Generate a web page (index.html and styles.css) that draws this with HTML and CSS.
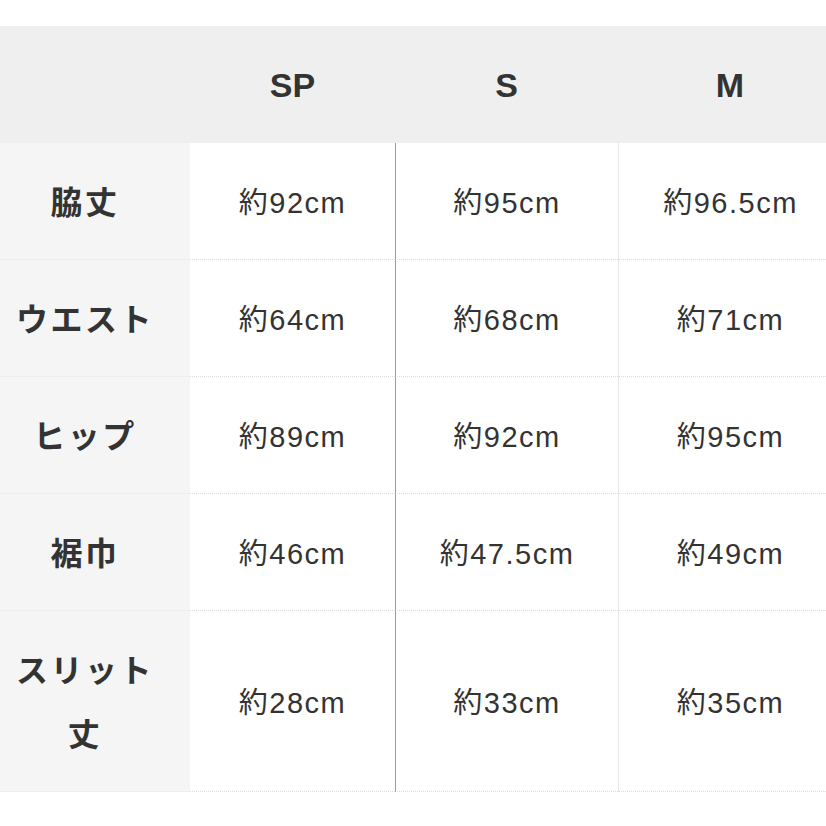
FILE: index.html
```html
<!DOCTYPE html>
<html lang="ja">
<head>
<meta charset="utf-8">
<link rel="stylesheet" href="styles.css">
</head>
<body>
<div class="table">
  <div class="row head">
    <div class="cell label"></div>
    <div class="cell">SP</div>
    <div class="cell">S</div>
    <div class="cell">M</div>
  </div>
  <div class="row">
    <div class="cell label">脇丈</div>
    <div class="cell">約92cm</div>
    <div class="cell c2">約95cm</div>
    <div class="cell c3">約96.5cm</div>
  </div>
  <div class="row">
    <div class="cell label">ウエスト</div>
    <div class="cell">約64cm</div>
    <div class="cell c2">約68cm</div>
    <div class="cell c3">約71cm</div>
  </div>
  <div class="row">
    <div class="cell label">ヒップ</div>
    <div class="cell">約89cm</div>
    <div class="cell c2">約92cm</div>
    <div class="cell c3">約95cm</div>
  </div>
  <div class="row">
    <div class="cell label">裾巾</div>
    <div class="cell">約46cm</div>
    <div class="cell c2">約47.5cm</div>
    <div class="cell c3">約49cm</div>
  </div>
  <div class="row">
    <div class="cell label">スリット丈</div>
    <div class="cell">約28cm</div>
    <div class="cell c2">約33cm</div>
    <div class="cell c3">約35cm</div>
  </div>
</div>
</body>
</html>
```
FILE: styles.css
```css
html, body {
  margin: 0;
  padding: 0;
  background: #ffffff;
  overflow: hidden;
}
body {
  font-family: "Liberation Sans", "Noto Sans CJK JP", sans-serif;
  color: #333333;
}
.table {
  margin-top: 26px;
  width: 842px;
}
.row {
  display: grid;
  grid-template-columns: 190px 205px 223px 224px;
}
.cell {
  display: flex;
  align-items: center;
  justify-content: center;
  text-align: center;
  font-size: 29px;
  letter-spacing: 1.5px;
  line-height: 64px;
  padding: 28px 0 24px;
  border-bottom: 1px dotted #dcdcdc;
  background: #ffffff;
}
.head .cell {
  background: #efefef;
  font-weight: bold;
  font-size: 34px;
  letter-spacing: 0;
  height: 117px;
  padding: 0;
  border-bottom: none;
  box-sizing: border-box;
}
.label {
  background: #f5f5f5;
  font-weight: bold;
  font-size: 32px;
  letter-spacing: 2.5px;
  padding-left: 10px;
  padding-right: 30px;
  border-bottom: 1px solid #eeeeee;
}
.c2 {
  border-left: 1px solid #9c9c9c;
}
.c3 {
  border-left: 1px solid #e6e6e6;
}
```
